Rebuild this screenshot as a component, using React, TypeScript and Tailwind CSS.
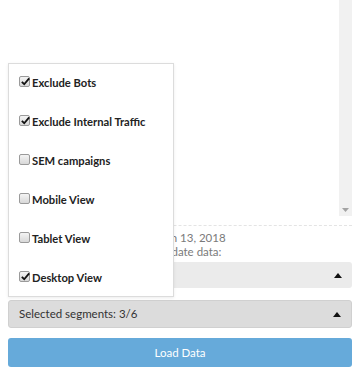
import React from "react";

const items = [
  { label: "Exclude Bots", checked: true },
  { label: "Exclude Internal Traffic", checked: true },
  { label: "SEM campaigns", checked: false },
  { label: "Mobile View", checked: false },
  { label: "Tablet View", checked: false },
  { label: "Desktop View", checked: true },
];

function Box({ checked }: { checked: boolean }) {
  return (
    <span className="relative inline-block w-[11px] h-[11px] rounded-[2px] border border-[#9a9a9a] bg-gradient-to-b from-[#f4f4f4] to-[#d8d8d8] shrink-0 mt-[-3px]">
      {checked && (
        <svg viewBox="0 0 12 12" className="absolute left-[0px] top-[-1px] w-[11px] h-[11px]">
          <path d="M2 6.5 L4.6 9 L10 2.5" fill="none" stroke="#111" strokeWidth="2" />
        </svg>
      )}
    </span>
  );
}

function Up() {
  return (
    <svg width="8" height="5" viewBox="0 0 8 5">
      <path d="M0 5 L4 0 L8 5 Z" fill="#111" />
    </svg>
  );
}

export default function App() {
  return (
    <div className="relative w-[360px] h-[377px] bg-white overflow-hidden font-['Lato','Open_Sans',sans-serif]">
      <div className="flex flex-col px-[8px]">
        <div className="flex h-[216px] justify-end">
          <div className="w-[13px] h-full bg-[#f1f1f1] flex flex-col justify-end items-center pb-[4px]">
            <svg width="7" height="4" viewBox="0 0 7 4">
              <path d="M0 0 L7 0 L3.5 4 Z" fill="#a3a3a3" />
            </svg>
          </div>
        </div>
        <div className="mt-[9px] border-t border-dashed border-[#e4e4e4]" />
        <div className="pl-[10px] pt-[5px] text-[11.5px] leading-[14px] text-[#7a7a7a] whitespace-nowrap">
          <div>Latest data is available from Jan 13, 2018</div>
          <div>Select a time range here, to update data:</div>
        </div>
        <div className="mt-[3px] h-[26px] rounded-[3px] bg-[#ebebeb] flex items-center justify-end pr-[10px]">
          <Up />
        </div>
        <div className="mt-[12px] h-[28px] rounded-[3px] bg-[#dcdcdc] border border-[#d0d0d0] flex items-center justify-between pl-[10px] pr-[10px] text-[11.5px] text-[#333]">
          <span>Selected segments: 3/6</span>
          <Up />
        </div>
        <div className="mt-[10px] h-[29px] rounded-[3px] bg-[#66aada] flex items-center justify-center text-[11.5px] text-white">
          Load Data
        </div>
      </div>

      <div className="absolute left-[8px] top-[63px] w-[166px] h-[234px] bg-white border border-[#dcdcdc] shadow-[0_1px_3px_rgba(0,0,0,0.08)] flex flex-col">
        {items.map((it) => (
          <div key={it.label} className="h-[39px] shrink-0 flex items-center gap-[2px] pl-[10px] pb-[2px] text-[11.2px] font-bold text-[#222]">
            <Box checked={it.checked} />
            <span className="leading-[14px]">{it.label}</span>
          </div>
        ))}
      </div>
    </div>
  );
}
